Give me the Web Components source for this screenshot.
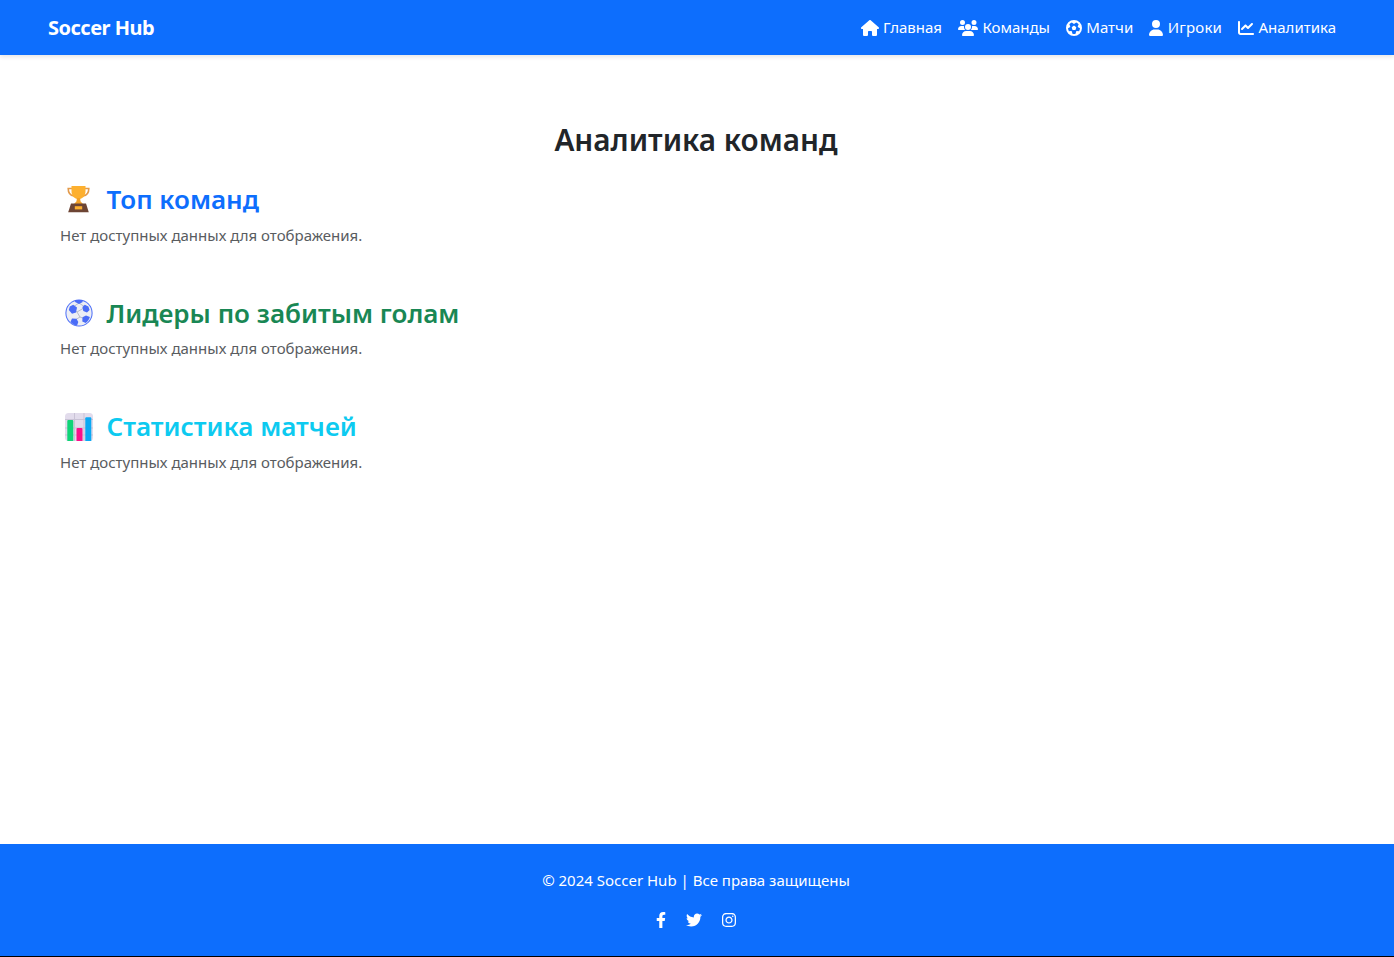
<!DOCTYPE html>
<html lang="ru">
<head>
<meta charset="utf-8">
<title>Soccer Hub</title>
<style>
    html, body { margin: 0; padding: 0; background: #fff; }
    body { font-family: "Noto Sans", "Open Sans", sans-serif; color: #212529; }
</style>
</head>
<body>

<soccer-app>
    <soccer-nav slot="nav" brand="Soccer Hub">
        <nav-link icon="home">Главная</nav-link>
        <nav-link icon="users">Команды</nav-link>
        <nav-link icon="futbol">Матчи</nav-link>
        <nav-link icon="user" style="letter-spacing: 0.2px">Игроки</nav-link>
        <nav-link icon="chart">Аналитика</nav-link>
    </soccer-nav>

    <page-title>Аналитика команд</page-title>

    <stat-section color="#0d6efd" emoji="trophy">Топ команд</stat-section>
    <stat-section color="#198754" emoji="ball">Лидеры по забитым голам</stat-section>
    <stat-section color="#0dcaf0" emoji="bars">Статистика матчей</stat-section>

    <soccer-footer slot="footer"></soccer-footer>
</soccer-app>

<script>
const ICONS = {
    home: ['0 0 576 512', 'M575.8 255.5c0 18-15 32.1-32 32.1h-32l.7 160.2c0 2.7-.2 5.4-.5 8.1V472c0 22.1-17.9 40-40 40H456c-1.1 0-2.2 0-3.3-.1c-1.4 .1-2.8 .1-4.2 .1H416 392c-22.1 0-40-17.9-40-40V448 384c0-17.7-14.3-32-32-32H256c-17.7 0-32 14.3-32 32v64 24c0 22.1-17.9 40-40 40H160 128.1c-1.5 0-3-.1-4.5-.2c-1.2 .1-2.4 .2-3.6 .2H104c-22.1 0-40-17.9-40-40V360c0-.9 0-1.9 .1-2.8V287.6H32c-18 0-32-14-32-32.1c0-9 3-17 10-24L266.4 8c7-7 15-8 22-8s15 2 21 7L564.8 231.5c8 7 12 15 11 24z'],
    users: ['0 0 640 512', 'M144 0a80 80 0 1 1 0 160A80 80 0 1 1 144 0zM512 0a80 80 0 1 1 0 160A80 80 0 1 1 512 0zM0 298.7C0 239.8 47.8 192 106.7 192h42.7c15.9 0 31 3.5 44.6 9.7c-1.3 7.2-1.9 14.7-1.9 22.3c0 38.2 16.8 72.5 43.3 96c-.2 0-.4 0-.7 0H21.3C9.6 320 0 310.4 0 298.7zM405.3 320c-.2 0-.4 0-.7 0c26.6-23.5 43.3-57.8 43.3-96c0-7.6-.7-15-1.9-22.3c13.6-6.3 28.7-9.7 44.6-9.7h42.7C592.2 192 640 239.8 640 298.7c0 11.8-9.6 21.3-21.3 21.3H405.3zM224 224a96 96 0 1 1 192 0 96 96 0 1 1 -192 0zM128 485.3C128 411.7 187.7 352 261.3 352H378.7C452.3 352 512 411.7 512 485.3c0 14.7-11.9 26.7-26.7 26.7H154.7c-14.7 0-26.7-11.9-26.7-26.7z'],
    futbol: ['0 0 512 512', 'M417.3 360.1l-71.6-4.8c-5.2-.3-10.3 1.1-14.5 4.2s-7.2 7.4-8.4 12.5l-17.6 69.6C289.5 445.8 273 448 256 448s-33.5-2.2-49.2-6.4L189.2 372c-1.3-5-4.3-9.4-8.4-12.5s-9.3-4.5-14.5-4.2l-71.6 4.8c-17.6-27.2-28.5-59.2-30.4-93.6L125 228.3c4.4-2.8 7.6-7 9.2-11.9s1.4-10.2-.5-15l-26.7-66.6C128 109.2 155.3 89 186.7 76.9l55.2 46c4 3.3 9 5.1 14.1 5.1s10.2-1.8 14.1-5.1l55.2-46c31.3 12.1 58.7 32.3 79.6 57.9l-26.7 66.6c-1.9 4.8-2.1 10.1-.5 15s4.9 9.1 9.2 11.9l60.7 38.2c-1.9 34.4-12.8 66.4-30.4 93.6zM256 512A256 256 0 1 0 256 0a256 256 0 1 0 0 512zm14.1-325.7c-8.4-6.1-19.8-6.1-28.2 0L194 221c-8.4 6.1-11.9 16.9-8.7 26.8l18.3 56.3c3.2 9.9 12.4 16.6 22.8 16.6h59.2c10.4 0 19.6-6.7 22.8-16.6l18.3-56.3c3.2-9.9-.3-20.7-8.7-26.8l-47.9-34.8z'],
    user: ['0 0 448 512', 'M224 256A128 128 0 1 0 224 0a128 128 0 1 0 0 256zm-45.7 48C79.8 304 0 383.8 0 482.3C0 498.7 13.3 512 29.7 512H418.3c16.4 0 29.7-13.3 29.7-29.7C448 383.8 368.2 304 269.7 304H178.3z'],
    chart: ['0 0 512 512', 'M64 64c0-17.7-14.3-32-32-32S0 46.3 0 64V400c0 44.2 35.8 80 80 80H480c17.7 0 32-14.3 32-32s-14.3-32-32-32H80c-8.8 0-16-7.2-16-16V64zm406.6 86.6c12.5-12.5 12.5-32.8 0-45.3s-32.8-12.5-45.3 0L320 210.7l-57.4-57.4c-12.5-12.5-32.8-12.5-45.3 0l-112 112c-12.5 12.5-12.5 32.8 0 45.3s32.8 12.5 45.3 0L240 221.3l57.4 57.4c12.5 12.5 32.8 12.5 45.3 0l128-128z'],
    facebook: ['0 0 320 512', 'M279.14 288l14.22-92.66h-88.91v-60.13c0-25.35 12.42-50.06 52.24-50.06h40.42V6.26S260.43 0 225.36 0c-73.22 0-121.08 44.38-121.08 124.72v70.62H22.89V288h81.39v224h100.17V288z'],
    twitter: ['0 0 512 512', 'M459.37 151.716c.325 4.548.325 9.097.325 13.645 0 138.72-105.583 298.558-298.558 298.558-59.452 0-114.68-17.219-161.137-47.106 8.447.974 16.568 1.299 25.34 1.299 49.055 0 94.213-16.568 130.274-44.832-46.132-.975-84.792-31.188-98.112-72.772 6.498.974 12.995 1.624 19.818 1.624 9.421 0 18.843-1.3 27.614-3.573-48.081-9.747-84.143-51.98-84.143-102.985v-1.299c13.969 7.797 30.214 12.67 47.431 13.319-28.264-18.843-46.781-51.005-46.781-87.391 0-19.492 5.197-37.36 14.294-52.954 51.655 63.675 129.3 105.258 216.365 109.807-1.624-7.797-2.599-15.918-2.599-24.04 0-57.828 46.782-104.934 104.934-104.934 30.213 0 57.502 12.67 76.67 33.137 23.715-4.548 46.456-13.32 66.599-25.34-7.798 24.366-24.366 44.833-46.132 57.827 21.117-2.273 41.584-8.122 60.426-16.243-14.292 20.791-32.161 39.308-52.628 54.253z'],
    instagram: ['0 0 448 512', 'M224.1 141c-63.6 0-114.9 51.3-114.9 114.9s51.3 114.9 114.9 114.9S339 319.5 339 255.9 287.7 141 224.1 141zm0 189.6c-41.1 0-74.7-33.5-74.7-74.7s33.5-74.7 74.7-74.7 74.7 33.5 74.7 74.7-33.6 74.7-74.7 74.7zm146.4-194.3c0 14.9-12 26.8-26.8 26.8-14.9 0-26.8-12-26.8-26.8s12-26.8 26.8-26.8 26.8 12 26.8 26.8zm76.1 27.2c-1.7-35.9-9.9-67.7-36.2-93.9-26.2-26.2-58-34.4-93.9-36.2-37-2.1-147.9-2.1-184.9 0-35.8 1.7-67.6 9.9-93.9 36.1s-34.4 58-36.2 93.9c-2.1 37-2.1 147.9 0 184.9 1.7 35.9 9.9 67.7 36.2 93.9s58 34.4 93.9 36.2c37 2.1 147.9 2.1 184.9 0 35.9-1.7 67.7-9.9 93.9-36.2 26.2-26.2 34.4-58 36.2-93.9 2.1-37 2.1-147.8 0-184.8zM398.8 388c-7.8 19.6-22.9 34.7-42.6 42.6-29.5 11.7-99.5 9-132.1 9s-102.7 2.6-132.1-9c-19.6-7.8-34.7-22.9-42.6-42.6-11.7-29.5-9-99.5-9-132.1s-2.6-102.7 9-132.1c7.8-19.6 22.9-34.7 42.6-42.6 29.5-11.7 99.5-9 132.1-9s102.7-2.6 132.1 9c19.6 7.8 34.7 22.9 42.6 42.6 11.7 29.5 9 99.5 9 132.1s2.7 102.7-9 132.1z'],
};

// the three heading pictures, drawn on a 28 box
const EMOJI = {
    trophy: `
      <g transform="translate(0 -1)">
        <path d="M7 3.5H3.2c0 4 2 7 5.8 7.5M20 3.5h3.8c0 4-2 7-5.8 7.5" fill="none" stroke="#e39a4a" stroke-width="1.6"/>
        <path d="M6.5 .5h14V6c0 4.8-3 8.2-7 8.2s-7-3.4-7-8.2z" fill="#fdb02f"/>
        <path d="M12 13h3l.6 3.5 2.4 2.500H9l2.400-2.500z" fill="#f3a228"/>
        <path d="M6 18.500h15l2.800 8.700H3.200z" fill="#6d4534"/>
        <rect x="9.800" y="21.200" width="7.400" height="3.200" fill="#fdb02f"/>
      </g>`,
    ball: `
        <circle cx="14" cy="14" r="13.600" fill="#4a6cf7"/>
        <circle cx="14" cy="14" r="12.600" fill="#eceef5"/>
        <path d="M12 13 8 10M12 13l3 5M12 13l6-3.500M15 18l5 2M15 18l-5 3M14 4 8 8M14 4l6 4" stroke="#b9bdc9" stroke-width="1" fill="none"/>
        <path d="M10 .9l7 0 .8 2.200-3.800 1.800-3.900-1.800zM8.200 5.800l3.800 2.700-1 5-4 1.200-3.200-3.700 1-3.600zM19.800 5.800l3.600 1.800 1.200 3.500-2.600 2.400-3.700-1.500-.9-4zM7 19.500l4.500.2 1.800 3.400-1.300 3.600c-2.800-.5-5-2-6.500-4zM21 16.500l3.900 1.600c-.8 2.500-2 4.200-4.200 6l-3.400-1.700.2-4.200z" fill="#4a6cf7"/>`,
    bars: `
        <rect x="0" y="0" width="28" height="28" rx="3.500" fill="#e2dcec"/>
        <path d="M0 6.500H28M0 15H28M0 22H28M9.500 0V28M19 0V28" stroke="#c9c3d6" stroke-width="1"/>
        <path d="M2.300 8a1 1 0 0 1 1-1h4a1 1 0 0 1 1 1V28H2.300z" fill="#0fd477"/>
        <path d="M11.500 16a1 1 0 0 1 1-1h4a1 1 0 0 1 1 1V28H11.500z" fill="#fb0f8a"/>
        <path d="M20.300 5.300a1 1 0 0 1 1-1h4a1 1 0 0 1 1 1V28H20.300z" fill="#0aa9f4"/>`,
};

function iconSvg(name, height) {
    const [viewBox, d] = ICONS[name];
    const [, , w, h] = viewBox.split(' ').map(Number);
    return `<svg xmlns="http://www.w3.org/2000/svg" viewBox="${viewBox}" width="${height * w / h}" height="${height}" fill="currentColor"><path d="${d}"/></svg>`;
}

class SoccerApp extends HTMLElement {
    constructor() {
        super();
        this.attachShadow({ mode: 'open' });
        this.shadowRoot.innerHTML = `
<style>
    :host { display: flex; flex-direction: column; min-height: 957px; }
    main { flex: 1; padding: 66px 60px 0; }
</style>
<slot name="nav"></slot>
<main><slot></slot></main>
<slot name="footer"></slot>`;
    }
}

class SoccerNav extends HTMLElement {
    constructor() {
        super();
        this.attachShadow({ mode: 'open' });
        this.shadowRoot.innerHTML = `
<style>
    :host {
        display: flex;
        align-items: center;
        justify-content: space-between;
        height: 55px;
        padding: 0 50px 0 48px;
        background: #0d6efd;
        box-shadow: 0 2px 4px rgba(0,0,0,0.1);
        position: relative;
    }
    .brand { color: #fff; font-size: 20px; font-weight: 700; letter-spacing: -0.5px; }
    .links { display: flex; }
</style>
<span class="brand"></span>
<div class="links"><slot></slot></div>`;
        this.shadowRoot.querySelector('.brand').textContent = this.getAttribute('brand');
    }
}

class NavLink extends HTMLElement {
    constructor() {
        super();
        this.attachShadow({ mode: 'open' });
        this.shadowRoot.innerHTML = `
<style>
    :host {
        display: flex;
        align-items: center;
        gap: 4.4px;
        padding: 0 8px;
        color: #fff;
        font-size: 15px;
        line-height: 24px;
    }
    svg { display: block; }
    span { position: relative; top: -1px; }
</style>
${iconSvg(this.getAttribute('icon'), 16)}
<span><slot></slot></span>`;
    }
}

class PageTitle extends HTMLElement {
    constructor() {
        super();
        this.attachShadow({ mode: 'open' });
        this.shadowRoot.innerHTML = `
<style>
    :host {
        display: block;
        padding-right: 2px;
        text-align: center;
        font-size: 29.7px;
        font-weight: 600;
        line-height: 38px;
        margin-bottom: 24px;
    }
</style>
<slot></slot>`;
    }
}

class StatSection extends HTMLElement {
    constructor() {
        super();
        this.attachShadow({ mode: 'open' });
        this.shadowRoot.innerHTML = `
<style>
    :host { display: block; margin-bottom: 50px; }
    h3 {
        display: flex;
        align-items: center;
        margin: 0 0 6px;
        font-size: 26px;
        font-weight: 600;
        line-height: 33.6px;
    }
    svg { display: block; margin: 0 13.5px 0 5px; }
    p {
        margin: 0;
        font-size: 15px;
        line-height: 24px;
        color: #595c5f;
    }
</style>
<h3><svg viewBox="0 0 28 28" width="28" height="28">${EMOJI[this.getAttribute('emoji')]}</svg><slot></slot></h3>
<p>Нет доступных данных для отображения.</p>`;
        this.shadowRoot.querySelector('h3').style.color = this.getAttribute('color');
    }
}

class SoccerFooter extends HTMLElement {
    constructor() {
        super();
        this.attachShadow({ mode: 'open' });
        this.shadowRoot.innerHTML = `
<style>
    :host {
        display: block;
        padding: 24px 2px 24px 0;
        background: #0d6efd;
        border-bottom: 1px solid #000;
        color: #fff;
        text-align: center;
        font-size: 15px;
        line-height: 24px;
    }
    p { margin: 0 0 16px; }
    .social { display: flex; justify-content: center; align-items: center; gap: 20px; height: 24px; }
    svg { display: block; }
</style>
<p>© 2024 Soccer Hub | Все права защищены</p>
<div class="social">${iconSvg('facebook', 16)}${iconSvg('twitter', 16)}${iconSvg('instagram', 16)}</div>`;
    }
}

customElements.define('soccer-app', SoccerApp);
customElements.define('soccer-nav', SoccerNav);
customElements.define('nav-link', NavLink);
customElements.define('page-title', PageTitle);
customElements.define('stat-section', StatSection);
customElements.define('soccer-footer', SoccerFooter);
</script>
</body>
</html>
